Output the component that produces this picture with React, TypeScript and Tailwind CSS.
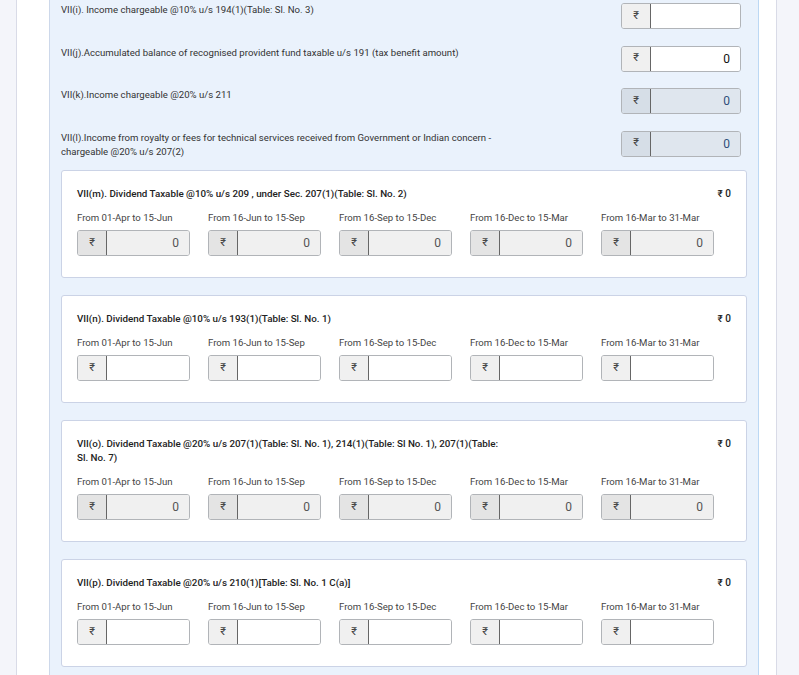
const periods = [
  'From 01-Apr to 15-Jun',
  'From 16-Jun to 15-Sep',
  'From 16-Sep to 15-Dec',
  'From 16-Dec to 15-Mar',
  'From 16-Mar to 31-Mar',
];

function Rupee({ disabled, blue }: { disabled?: boolean; blue?: boolean }) {
  const bg = blue ? 'bg-[#d6dee7]' : disabled ? 'bg-[#e4e4e4]' : 'bg-[#f0f0f0]';
  return (
    <span
      className={`flex w-[29px] shrink-0 items-center justify-center border-r border-[#666] text-[11px] text-[#444] ${bg}`}
    >
      ₹
    </span>
  );
}

function Amount({ value, disabled, blue, width }: { value?: string; disabled?: boolean; blue?: boolean; width: string }) {
  const bg = blue ? 'bg-[#dfe6ee]' : disabled ? 'bg-[#f0f0f0]' : 'bg-white';
  const color = blue ? 'text-[#2f4f7a]' : disabled ? 'text-[#555]' : 'text-[#111]';
  return (
    <div className={`flex h-[26px] overflow-hidden rounded-[3px] border border-[#b1b4b8] ${width}`}>
      <Rupee disabled={disabled} blue={blue} />
      <div className={`flex flex-1 items-center justify-end pr-[10px] text-[12px] ${bg} ${color}`}>{value}</div>
    </div>
  );
}

function TopRow({ children, value, blue }: { children: React.ReactNode; value?: string; blue?: boolean }) {
  return (
    <div className="flex items-start justify-between pr-[6px]">
      <div className="text-[9.6px] leading-[14px] text-[#333]">{children}</div>
      <Amount value={value} blue={blue} width="w-[120px]" />
    </div>
  );
}

function Card({ title, filled }: { title: React.ReactNode; filled: boolean }) {
  return (
    <div className="rounded-[3px] border border-[#cbd3e6] bg-white px-[15px] pt-[16px] pb-[21px]">
      <div className="mb-[10px] flex items-start justify-between">
        <div className="text-[9.8px] font-medium leading-[14px] text-[#222]">{title}</div>
        <div className="text-[10px] font-medium leading-[14px] text-[#222]">₹ 0</div>
      </div>
      <div className="flex gap-[18px]">
        {periods.map((p) => (
          <div key={p} className="w-[113px]">
            <div className="mb-[5px] whitespace-nowrap text-[9.6px] leading-[14px] text-[#444]">{p}</div>
            <Amount value={filled ? '0' : ''} disabled={filled} width="w-[113px]" />
          </div>
        ))}
      </div>
    </div>
  );
}

export default function App() {
  return (
    <div className="flex min-h-[675px] bg-white font-['Roboto','Liberation_Sans',sans-serif]">
      <div className="w-[17px] shrink-0 border-r border-[#d9dbe7] bg-[#f4f5fa]" />
      <div className="w-[32px] shrink-0 bg-white" />
      <div className="w-[710px] shrink-0 border-x border-l-[#cdd8ea] border-r-[#bcd8f4] bg-[#eaf2fc] px-[11px] pt-[3px]">
        <div className="flex flex-col gap-[16.5px]">
          <TopRow>VII(i). Income chargeable @10% u/s 194(1)(Table: Sl. No. 3)</TopRow>
          <TopRow value="0">
            VII(j).Accumulated balance of recognised provident fund taxable u/s 191 (tax benefit amount)
          </TopRow>
          <TopRow value="0" blue>
            VII(k).Income chargeable @20% u/s 211
          </TopRow>
          <TopRow value="0" blue>
            <span className="whitespace-nowrap">
              VII(l).Income from royalty or fees for technical services received from Government or Indian concern -
            </span>
            <br />
            chargeable @20% u/s 207(2)
          </TopRow>
        </div>
        <div className="mt-[11.5px] flex flex-col gap-[17px]">
          <Card filled title="VII(m). Dividend Taxable @10% u/s 209 , under Sec. 207(1)(Table: Sl. No. 2)" />
          <Card filled={false} title="VII(n). Dividend Taxable @10% u/s 193(1)(Table: Sl. No. 1)" />
          <Card
            filled
            title={
              <>
                <span className="whitespace-nowrap">
                  VII(o). Dividend Taxable @20% u/s 207(1)(Table: Sl. No. 1), 214(1)(Table: Sl No. 1), 207(1)(Table:
                </span>
                <br />
                Sl. No. 7)
              </>
            }
          />
          <Card filled={false} title="VII(p). Dividend Taxable @20% u/s 210(1)[Table: Sl. No. 1 C(a)]" />
        </div>
      </div>
      <div className="w-[17px] shrink-0 bg-white" />
      <div className="flex-1 border-l border-[#d9dbe7] bg-[#f4f5fa]" />
    </div>
  );
}
